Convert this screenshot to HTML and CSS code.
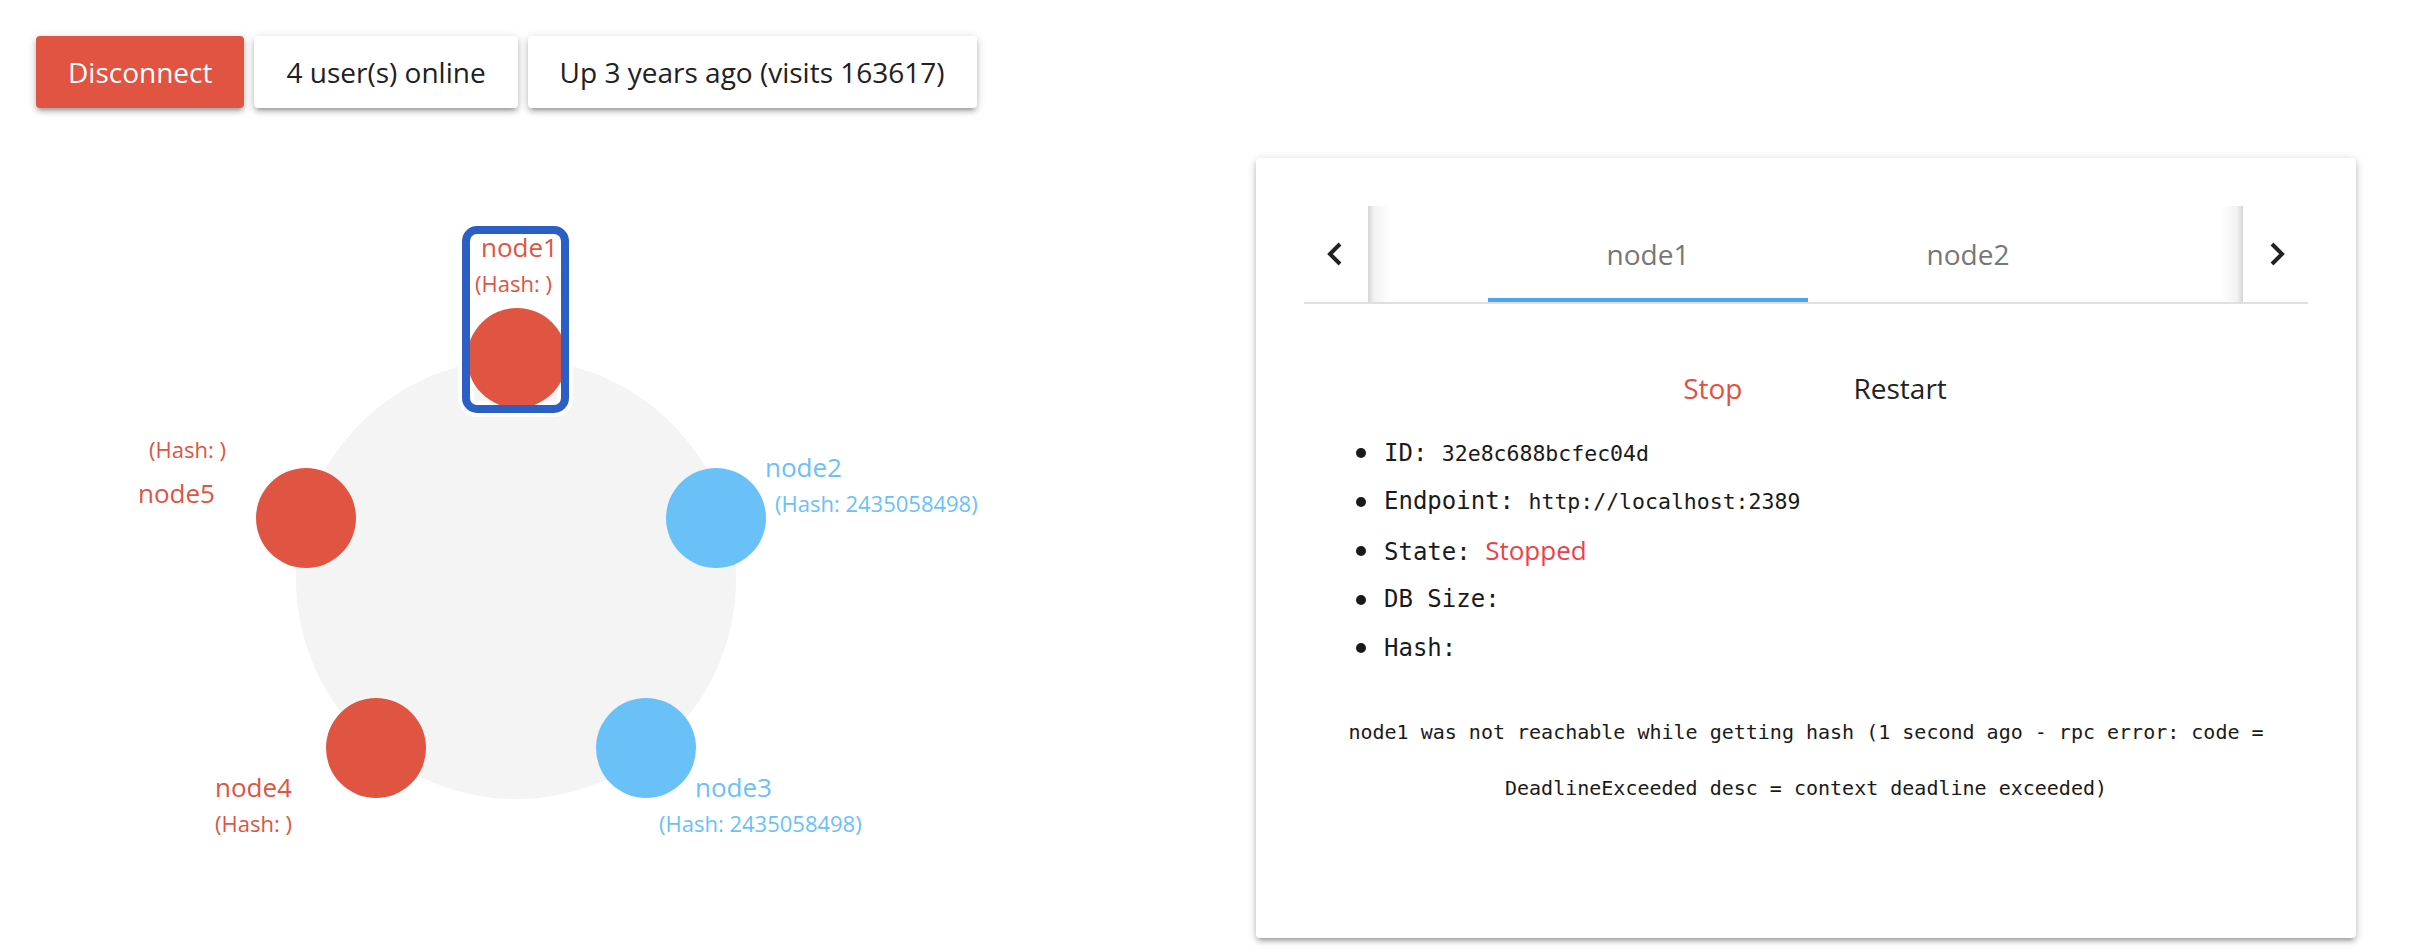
FILE: index.html
```html
<!DOCTYPE html>
<html>
<head>
<meta charset="utf-8">
<link rel="stylesheet" href="styles.css">
</head>
<body>
<div class="page">
  <div class="topbar">
    <div class="btn btn-red">Disconnect</div>
    <div class="btn btn-white">4 user(s) online</div>
    <div class="btn btn-white">Up 3 years ago (visits 163617)</div>
  </div>
  <div class="main">
    <div class="graph">
      <svg class="ring" width="1220" height="780" viewBox="0 0 1220 780">
        <defs>
          <clipPath id="inner"><rect x="434" y="76" width="91" height="171" rx="7"/></clipPath>
        </defs>
        <circle cx="480" cy="421" r="220" fill="#f4f4f4"/>
        <rect x="430" y="72" width="99" height="179" rx="11" fill="none" stroke="#ffffff" stroke-width="16"/>
        <circle cx="481" cy="200" r="50" fill="#e05442" clip-path="url(#inner)"/>
        <rect x="430" y="72" width="99" height="179" rx="11" fill="none" stroke="#2b5fc6" stroke-width="8"/>
        <circle cx="680" cy="360" r="50" fill="#6ac1f8"/>
        <circle cx="610" cy="590" r="50" fill="#6ac1f8"/>
        <circle cx="340" cy="590" r="50" fill="#e05442"/>
        <circle cx="270" cy="360" r="50" fill="#e05442"/>
        <text class="name red" x="445" y="99">node1</text>
        <text class="hash red" x="439" y="134">(Hash: )</text>
        <text class="name blue" x="729" y="319">node2</text>
        <text class="hash blue" x="739" y="354">(Hash: 2435058498)</text>
        <text class="name blue" x="659" y="639">node3</text>
        <text class="hash blue" x="623" y="674">(Hash: 2435058498)</text>
        <text class="name red" x="179" y="639">node4</text>
        <text class="hash red" x="179" y="674">(Hash: )</text>
        <text class="hash red" x="113" y="300">(Hash: )</text>
        <text class="name red" x="102" y="345">node5</text>
      </svg>
    </div>
    <div class="card">
      <div class="tabs">
        <div class="arrow">
          <svg width="20" height="26" viewBox="0 0 20 26"><polyline points="14,3 4,13 14,23" fill="none" stroke="#222" stroke-width="4"/></svg>
        </div>
        <div class="viewport">
          <div class="tab active">node1</div>
          <div class="tab">node2</div>
        </div>
        <div class="arrow">
          <svg width="20" height="26" viewBox="0 0 20 26"><polyline points="6,3 16,13 6,23" fill="none" stroke="#222" stroke-width="4"/></svg>
        </div>
      </div>
      <div class="actions">
        <div class="flat stop">Stop</div>
        <div class="flat restart">Restart</div>
      </div>
      <ul class="info">
        <li><span>ID: <span class="val">32e8c688bcfec04d</span></span></li>
        <li><span>Endpoint: <span class="val">http://localhost:2389</span></span></li>
        <li><span>State: <span class="state">Stopped</span></span></li>
        <li><span>DB Size: </span></li>
        <li><span>Hash: </span></li>
      </ul>
      <p class="error">node1 was not reachable while getting hash (1 second ago - rpc error: code = DeadlineExceeded desc = context deadline exceeded)</p>
    </div>
  </div>
</div>
</body>
</html>
```
FILE: styles.css
```css
* { box-sizing: border-box; }
html, body { margin: 0; padding: 0; background: #ffffff; }
body {
  font-family: "Open Sans", "Liberation Sans", sans-serif;
  color: rgba(0,0,0,0.87);
  width: 2412px;
  height: 952px;
  overflow: hidden;
}
.page { padding: 36px 56px 0 36px; }
.topbar { display: flex; gap: 10px; }
.btn {
  height: 72px;
  line-height: 72px;
  padding: 0 32px;
  font-size: 28px;
  border-radius: 4px;
  white-space: nowrap;
  box-shadow: 0 4px 4px 0 rgba(0,0,0,0.14), 0 6px 2px -4px rgba(0,0,0,0.12), 0 2px 10px 0 rgba(0,0,0,0.2);
}
.btn-red { background: #e05441; color: #ffffff; }
.btn-white { background: #ffffff; color: #212121; }

.main {
  display: grid;
  grid-template-columns: 1220px 1100px;
  margin-top: 50px;
}
.graph { height: 780px; }
.ring { display: block; }
.ring text { font-family: "Open Sans", sans-serif; }
.name { font-size: 26px; }
.hash { font-size: 22px; }
.red { fill: #e05442; }
.blue { fill: #6ac1f8; }

.card {
  background: #fff;
  height: 780px;
  border-radius: 4px;
  padding: 48px;
  box-shadow: 0 4px 4px 0 rgba(0,0,0,0.14), 0 6px 2px -4px rgba(0,0,0,0.12), 0 2px 10px 0 rgba(0,0,0,0.2);
}
.tabs {
  display: flex;
  height: 98px;
  border-bottom: 2px solid #e0e0e0;
}
.arrow {
  flex: 0 0 64px;
  display: flex;
  align-items: center;
  justify-content: center;
}
.arrow:last-child { flex-basis: 65px; }
.viewport {
  flex: 1 1 auto;
  display: flex;
  overflow: hidden;
  padding-left: 120px;
  height: 96px;
  background:
    linear-gradient(to right, rgba(0,0,0,0.16), rgba(0,0,0,0.05) 6px, rgba(0,0,0,0) 22px),
    linear-gradient(to left, rgba(0,0,0,0.16), rgba(0,0,0,0.05) 6px, rgba(0,0,0,0) 22px);
}
.tab {
  flex: 0 0 320px;
  height: 96px;
  padding-top: 4px;
  line-height: 88px;
  border-bottom: 4px solid transparent;
  text-align: center;
  font-size: 28px;
  color: #777777;
}
.tab.active { border-bottom-color: #4ea6ea; }

.actions {
  display: flex;
  justify-content: center;
  gap: 47px;
  margin-top: 48px;
  padding-left: 18px;
}
.flat {
  height: 72px;
  line-height: 72px;
  padding: 0 32px;
  font-size: 28px;
}
.stop { color: #e4503f; }
.restart { color: #212121; }

.info {
  list-style: none;
  margin: 5px 0 0 0;
  padding: 0;
}
.info li {
  display: flex;
  align-items: center;
  height: 48.75px;
  line-height: 48.75px;
  font-family: "DejaVu Sans Mono", "Liberation Mono", monospace;
  font-size: 24px;
  color: #1a1a1a;
}
.info li::before {
  content: "";
  flex: 0 0 10px;
  height: 10px;
  border-radius: 50%;
  background: #1a1a1a;
  margin: 0 18px 0 52px;
}
.val { font-size: 21.5px; }
.state {
  font-family: "Open Sans", sans-serif;
  font-size: 26px;
  color: #ef3f4a;
}
.error {
  margin: 31px 0 0 0;
  font-family: "DejaVu Sans Mono", "Liberation Mono", monospace;
  font-size: 20px;
  line-height: 56px;
  text-align: center;
  color: #1a1a1a;
}
```
